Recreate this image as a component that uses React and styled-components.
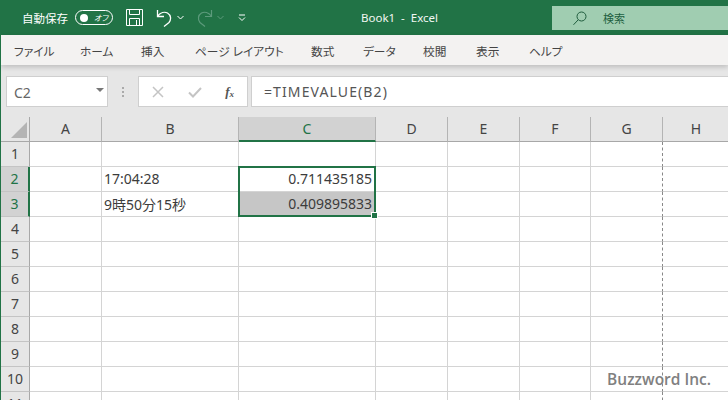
import React from "react";
import styled, { createGlobalStyle } from "styled-components";

const GlobalStyle = createGlobalStyle`
  html, body { margin: 0; padding: 0; background: #fff; overflow: hidden; }
  body { font-family: "Noto Sans", "Noto Sans CJK JP", sans-serif; }
`;

const tabs = [
  ["ファイル", 66], ["ホーム", 61], ["挿入", 54], ["ページ レイアウト", 116], ["数式", 52],
  ["データ", 60], ["校閲", 53], ["表示", 53], ["ヘルプ", 50],
];
const columns = ["A", "B", "C", "D", "E", "F", "G", "H"];
const rows = [1, 2, 3, 4, 5, 6, 7, 8, 9, 10, 11];
const cells = {
  B2: { text: "17:04:28" },
  C2: { text: "0.711435185", right: true, selected: true },
  B3: { text: "9時50分15秒" },
  C3: { text: "0.409895833", right: true, shaded: true },
};

const App = () => (
  <Page>
    <GlobalStyle />
    <TitleBar>
      <AutoSave>自動保存</AutoSave>
      <Toggle>
        <Knob />
        <ToggleText>オフ</ToggleText>
      </Toggle>
      <QuickIcon width="17" height="17" viewBox="0 0 17 17" $left={13}>
        <path d="M.5.5h16v16H.5z M3.500.5v5h10v-5 M3.500 16.500v-7h10v7 M10.500 11v5.500" fill="none" stroke="#fff" strokeWidth="1" />
      </QuickIcon>
      <QuickIcon width="17" height="18" viewBox="0 0 17 18" $left={13}>
        <path d="M1.500 1v6.500h6.500 M1.800 7C4.500 3.500 8.500 2.500 11.500 4C15 6 15.500 10.500 13 13.500L8 17.500" fill="none" stroke="#fff" strokeWidth="1.300" />
      </QuickIcon>
      <Chevron width="7" height="5" viewBox="0 0 7 5" $left={4}>
        <path d="M.5 1l3 3 3-3" fill="none" stroke="#fff" strokeWidth="1" />
      </Chevron>
      <QuickIcon width="17" height="18" viewBox="0 0 17 18" $left={12}>
        <path d="M15.500 1v6.500H9 M15.200 7C12.500 3.500 8.500 2.500 5.500 4C2 6 1.500 10.500 4 13.500L9 17.500" fill="none" stroke="#5c9a7b" strokeWidth="1.200" />
      </QuickIcon>
      <Chevron width="7" height="5" viewBox="0 0 7 5" $left={4}>
        <path d="M.5 1l3 3 3-3" fill="none" stroke="#5c9a7b" strokeWidth="1" />
      </Chevron>
      <Chevron width="8" height="8" viewBox="0 0 8 8" $left={14}>
        <path d="M1 1h6 M1 3.500l3 3 3-3" fill="none" stroke="#fff" strokeWidth="1" />
      </Chevron>
      <Title>Book1&nbsp; -&nbsp; Excel</Title>
      <SearchBox>
        <svg width="16" height="16" viewBox="0 0 16 16">
          <circle cx="9.500" cy="6.500" r="4.500" fill="none" stroke="#1f5c3d" strokeWidth="1" />
          <path d="M6.200 9.800L1.500 14.800" fill="none" stroke="#1f5c3d" strokeWidth="1" />
        </svg>
        <SearchText>検索</SearchText>
      </SearchBox>
    </TitleBar>
    <TabBar>
      {tabs.map(([label, width]) => (
        <Tab key={label} $width={width}>{label}</Tab>
      ))}
    </TabBar>
    <FormulaArea>
      <NameBox>
        C2
        <Caret />
      </NameBox>
      <Dots>
        <i /><i /><i />
      </Dots>
      <FormulaButtons>
        <svg width="12" height="12" viewBox="0 0 12 12">
          <path d="M1 1l10 10M11 1L1 11" fill="none" stroke="#c4c4c4" strokeWidth="1.500" />
        </svg>
        <svg width="14" height="12" viewBox="0 0 14 12">
          <path d="M1 6.500l4 4L13 2" fill="none" stroke="#c4c4c4" strokeWidth="2" />
        </svg>
        <Fx>f<sub>x</sub></Fx>
      </FormulaButtons>
      <FormulaInput>=TIMEVALUE(B2)</FormulaInput>
    </FormulaArea>
    <Sheet>
      <Corner>
        <svg width="18" height="18" viewBox="0 0 18 18">
          <path d="M17 1v16H1z" fill="#b4b4b4" />
        </svg>
      </Corner>
      {columns.map((col) => (
        <ColumnHead key={col} $selected={col === "C"} $last={col === "H"}>{col}</ColumnHead>
      ))}
      {rows.map((row) => (
        <React.Fragment key={row}>
          <RowHead $selected={row === 2 || row === 3}>{row}</RowHead>
          {columns.map((col) => {
            const cell = cells[col + row];
            return (
              <Cell key={col} $right={cell?.right} $shaded={cell?.shaded} $pageBreak={col === "G"} $last={col === "H"}>
                {cell?.text}
                {cell?.selected && (
                  <Selection>
                    <Handle />
                  </Selection>
                )}
              </Cell>
            );
          })}
        </React.Fragment>
      ))}
    </Sheet>
    <Watermark>Buzzword Inc.</Watermark>
  </Page>
);

export default App;

const Page = styled.div`
  position: relative;
  width: 728px;
  height: 400px;
  overflow: hidden;
  box-sizing: border-box;
  border-left: 1px solid #217346;
  background: #fff;
  font-feature-settings: "palt";
`;
const TitleBar = styled.div`
  height: 35px;
  margin-left: -1px;
  padding-left: 22px;
  display: flex;
  align-items: center;
  background: #217346;
  color: #fff;
`;
const AutoSave = styled.span`
  font-size: 11.500px;
  white-space: nowrap;
`;
const Toggle = styled.div`
  flex: none;
  width: 38px;
  height: 15px;
  margin-left: 7px;
  box-sizing: border-box;
  display: flex;
  align-items: center;
  padding: 0 4px;
  border: 1px solid #fff;
  border-radius: 8px;
`;
const Knob = styled.span`
  width: 8px;
  height: 8px;
  border-radius: 50%;
  background: #fff;
`;
const ToggleText = styled.span`
  margin-left: 6px;
  font-size: 8px;
  font-style: italic;
  white-space: nowrap;
`;
const QuickIcon = styled.svg`
  margin-left: ${(p) => p.$left}px;
  flex: none;
`;
const Chevron = styled.svg`
  margin-left: ${(p) => p.$left}px;
  flex: none;
`;
const Title = styled.span`
  position: absolute;
  left: 360px;
  top: 9px;
  font-family: "Noto Sans", sans-serif;
  font-size: 11.500px;
  line-height: 17px;
  color: #f1f7f3;
`;
const SearchBox = styled.div`
  position: absolute;
  left: 551px;
  top: 6px;
  width: 177px;
  height: 24px;
  display: flex;
  align-items: center;
  padding-left: 20px;
  box-sizing: border-box;
  background: #a0cdb1;
`;
const SearchText = styled.span`
  margin-left: 15px;
  font-size: 11px;
  color: #215f40;
`;
const TabBar = styled.div`
  height: 30px;
  padding-left: 13px;
  display: flex;
  align-items: center;
  box-sizing: border-box;
  background: #f3f2f1;
  position: relative;
  box-shadow: 0 2px 5px rgba(0, 0, 0, 0.18);
`;
const Tab = styled.span`
  flex: none;
  width: ${(p) => p.$width}px;
  font-size: 11.700px;
  color: #444;
  white-space: nowrap;
`;
const FormulaArea = styled.div`
  height: 52px;
  padding: 11px 0 0 5px;
  box-sizing: border-box;
  display: flex;
  align-items: flex-start;
  background: #e6e6e6;
`;
const NameBox = styled.div`
  position: relative;
  width: 102px;
  height: 31px;
  padding: 2px 0 0 7px;
  box-sizing: border-box;
  display: flex;
  align-items: center;
  font-size: 14px;
  color: #666;
  background: #fff;
  border: 1px solid #cfcfcf;
`;
const Caret = styled.span`
  position: absolute;
  right: 3px;
  top: 11px;
  border-left: 4px solid transparent;
  border-right: 4px solid transparent;
  border-top: 4px solid #777;
`;
const Dots = styled.div`
  width: 30px;
  height: 31px;
  display: flex;
  flex-direction: column;
  align-items: center;
  justify-content: center;
  gap: 2px;
  i {
    width: 2px;
    height: 2px;
    background: #aaa;
  }
`;
const FormulaButtons = styled.div`
  width: 110px;
  height: 31px;
  padding: 0 13px;
  box-sizing: border-box;
  display: flex;
  align-items: center;
  justify-content: space-between;
  background: #fff;
  border: 1px solid #cfcfcf;
`;
const Fx = styled.span`
  font-family: "Liberation Serif", serif;
  font-style: italic;
  font-weight: bold;
  font-size: 13px;
  color: #555;
  sub {
    font-size: 9px;
    vertical-align: -1px;
  }
`;
const FormulaInput = styled.div`
  flex: 1;
  height: 31px;
  margin-left: 3px;
  padding-left: 12px;
  box-sizing: border-box;
  display: flex;
  align-items: center;
  font-size: 14px;
  letter-spacing: 1.100px;
  color: #555;
  background: #fff;
  border: 1px solid #cfcfcf;
  border-right: 0;
`;
const Sheet = styled.div`
  display: grid;
  grid-template-columns: 29px 72px 137px 137px 72px 72px 71px 72px 66px;
  grid-auto-rows: 25px;
  font-size: 14px;
  color: #3c3c3c;
`;
const Corner = styled.div`
  display: flex;
  align-items: flex-end;
  justify-content: flex-end;
  padding: 0 1px 2px 0;
  box-sizing: border-box;
  background: #e6e6e6;
  border-bottom: 1px solid #a8a8a8;
  border-right: 1px solid #a8a8a8;
`;
const ColumnHead = styled.div`
  display: flex;
  align-items: center;
  justify-content: center;
  padding-bottom: 1px;
  box-sizing: border-box;
  font-size: 14px;
  background: ${(p) => (p.$selected ? "#d2d2d2" : "#e6e6e6")};
  color: ${(p) => (p.$selected ? "#217346" : "#444")};
  border-right: ${(p) => (p.$last ? "0" : "1px solid #b4b4b4")};
  border-bottom: ${(p) => (p.$selected ? "2px solid #217346" : "1px solid #a8a8a8")};
`;
const RowHead = styled.div`
  display: flex;
  align-items: center;
  justify-content: center;
  padding-bottom: 1px;
  box-sizing: border-box;
  font-size: 14px;
  background: ${(p) => (p.$selected ? "#d2d2d2" : "#e6e6e6")};
  color: ${(p) => (p.$selected ? "#217346" : "#444")};
  border-right: ${(p) => (p.$selected ? "2px solid #217346" : "1px solid #a8a8a8")};
  border-bottom: 1px solid #c4c4c4;
`;
const Cell = styled.div`
  position: relative;
  display: flex;
  align-items: center;
  justify-content: ${(p) => (p.$right ? "flex-end" : "flex-start")};
  padding: 0 3px 1px 2px;
  box-sizing: border-box;
  white-space: nowrap;
  background: ${(p) => (p.$shaded ? "#c6c6c6" : "#fff")};
  border-bottom: 1px solid #d4d4d4;
  border-right: ${(p) =>
    p.$pageBreak ? "1px dashed #888" : p.$last ? "0" : "1px solid #d4d4d4"};
`;
const Selection = styled.div`
  position: absolute;
  left: -1px;
  right: -1px;
  top: -1px;
  bottom: -26px;
  z-index: 2;
  border: 2px solid #217346;
  pointer-events: none;
`;
const Handle = styled.span`
  position: absolute;
  right: -4px;
  bottom: -4px;
  width: 5px;
  height: 5px;
  background: #217346;
  border: 1px solid #fff;
`;
const Watermark = styled.div`
  position: absolute;
  right: 17px;
  top: 369px;
  font-family: "Open Sans", sans-serif;
  font-size: 15.500px;
  font-weight: 600;
  line-height: 21px;
  color: #808080;
`;
